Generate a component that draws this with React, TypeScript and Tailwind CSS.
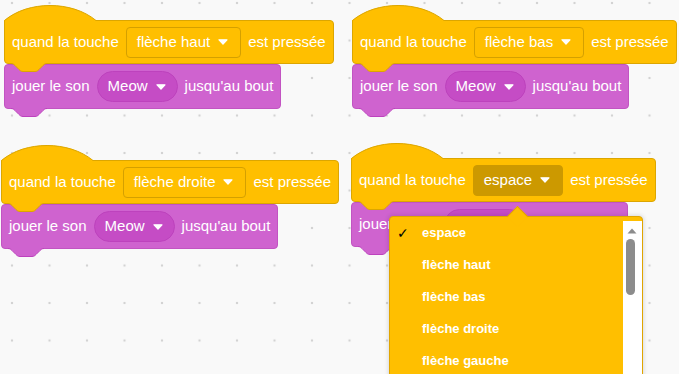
import type { ReactNode } from 'react';

const YELLOW = '#ffbf00';
const YELLOW_EDGE = '#dca600';
const PURPLE = '#cf63cf';
const PURPLE_EDGE = '#bd42bd';

function Caret() {
  return (
    <svg width="10" height="6" viewBox="0 0 10 6" className="shrink-0">
      <path d="M1,0.8 H9 L5,5.2 Z" fill="white" stroke="white" strokeWidth="1.2" strokeLinejoin="round" />
    </svg>
  );
}

function Dome({ fill, stroke }: { fill: string; stroke: string }) {
  return (
    <svg width="92" height="17" viewBox="0 0 92 17" className="absolute bottom-full -left-px overflow-visible">
      <path d="M0,17 L0,16.5 C24,-4 68,-4 92,16.5 L92,17 Z" fill={fill} />
      <path d="M0.5,17 L0.5,16.5 C24,-3.5 68,-3.5 92,16.5" fill="none" stroke={stroke} strokeWidth="1" />
    </svg>
  );
}

function Tab({ fill, stroke }: { fill: string; stroke: string }) {
  return (
    <svg width="36" height="10" viewBox="0 0 36 10" className="absolute top-full left-[6px] overflow-visible">
      <path
        d="M0,0 H36 V0.5 c-2,0 -3,1 -4,2 l-4,4 c-1,1 -2,2 -4,2 h-12 c-2,0 -3,-1 -4,-2 l-4,-4 c-1,-1 -2,-2 -4,-2 Z"
        fill={fill}
      />
      <path
        d="M0,0.5 c2,0 3,1 4,2 l4,4 c1,1 2,2 4,2 h12 c2,0 3,-1 4,-2 l4,-4 c1,-1 2,-2 4,-2"
        fill="none"
        stroke={stroke}
        strokeWidth="1"
      />
    </svg>
  );
}

function KeyField({ label, open }: { label: string; open?: boolean }) {
  return (
    <div
      className={
        open
          ? 'flex h-[31px] items-center gap-[8px] rounded-[4px] border border-[#cc9900] bg-[#cc9900] pl-[10px] pr-[12px]'
          : 'flex h-[31px] items-center gap-[8px] rounded-[4px] border border-[#d4a000] bg-[#ffbf00] pl-[10px] pr-[12px]'
      }
    >
      <span>{label}</span>
      <Caret />
    </div>
  );
}

function WhenKey({ keyName, open }: { keyName: string; open?: boolean }) {
  return (
    <div className="relative z-10 flex h-[44px] items-center gap-[7px] rounded-r-[4px] rounded-bl-[4px] border border-[#dca600] bg-[#ffbf00] px-[7px]">
      <Dome fill={YELLOW} stroke={YELLOW_EDGE} />
      <span>quand la touche</span>
      <KeyField label={keyName} open={open} />
      <span>est pressée</span>
      <Tab fill={YELLOW} stroke={YELLOW_EDGE} />
    </div>
  );
}

function PlaySound() {
  return (
    <div className="relative flex h-[45px] items-center gap-[7px] rounded-[4px] border border-[#c254c2] bg-[#cf63cf] px-[7px]">
      <span>jouer le son</span>
      <div className="flex h-[31px] items-center gap-[8px] rounded-full border border-[#bd42bd] bg-[#c54cc5] pl-[10px] pr-[11px]">
        <span>Meow</span>
        <Caret />
      </div>
      <span>jusqu'au bout</span>
      <Tab fill={PURPLE} stroke={PURPLE_EDGE} />
    </div>
  );
}

function Stack({ className, children }: { className: string; children: ReactNode }) {
  return <div className={`absolute flex flex-col items-start ${className}`}>{children}</div>;
}

const keys = ['espace', 'flèche haut', 'flèche bas', 'flèche droite', 'flèche gauche'];

export default function App() {
  return (
    <div className="relative h-[374px] w-[679px] overflow-hidden bg-[#f9f9f9] bg-[radial-gradient(circle,#d3d3d3_1px,transparent_1.6px)] bg-[length:37.5px_37.5px] bg-[position:-6.75px_-15.75px] font-['Liberation_Sans',Arial,sans-serif] text-[15px] text-white">
      <Stack className="left-[4px] top-[20px]">
        <WhenKey keyName="flèche haut" />
        <PlaySound />
      </Stack>

      <Stack className="left-[352px] top-[20px]">
        <WhenKey keyName="flèche bas" />
        <PlaySound />
      </Stack>

      <Stack className="left-[1px] top-[160px]">
        <WhenKey keyName="flèche droite" />
        <PlaySound />
      </Stack>

      <Stack className="left-[351px] top-[158px]">
        <WhenKey keyName="espace" open />
        <PlaySound />
      </Stack>

      {/* open dropdown of the last hat block */}
      <div className="absolute left-[389px] top-[216px] z-20 h-[170px] w-[254px] rounded-[4px] border border-[#e0a500] bg-[#ffbf00] shadow-[0_0_4px_1px_rgba(0,0,0,0.12)]">
        <div className="absolute -top-[8px] left-[120px] h-[15px] w-[15px] rotate-45 border-l border-t border-[#e0a500] bg-[#ffbf00]" />
        <ul className="relative text-[13px] font-bold">
          {keys.map((k, i) => (
            <li key={k} className="flex h-[32px] items-center pl-[7px]">
              <span className="w-[25px] font-['DejaVu_Sans',sans-serif] text-[14px] font-normal text-black">
                {i === 0 ? '✓' : ''}
              </span>
              <span>{k}</span>
            </li>
          ))}
        </ul>
        <div className="absolute right-0 top-[4px] bottom-0 w-[19px] bg-white">
          <svg width="10" height="6" viewBox="0 0 10 6" className="absolute left-[4px] top-[7px]">
            <path d="M0.5,5.5 L5,0.5 L9.5,5.5 Z" fill="#8c8c8c" />
          </svg>
          <div className="absolute left-[3px] top-[18px] h-[56px] w-[9px] rounded-full bg-[#8c8c8c]" />
        </div>
      </div>
    </div>
  );
}
